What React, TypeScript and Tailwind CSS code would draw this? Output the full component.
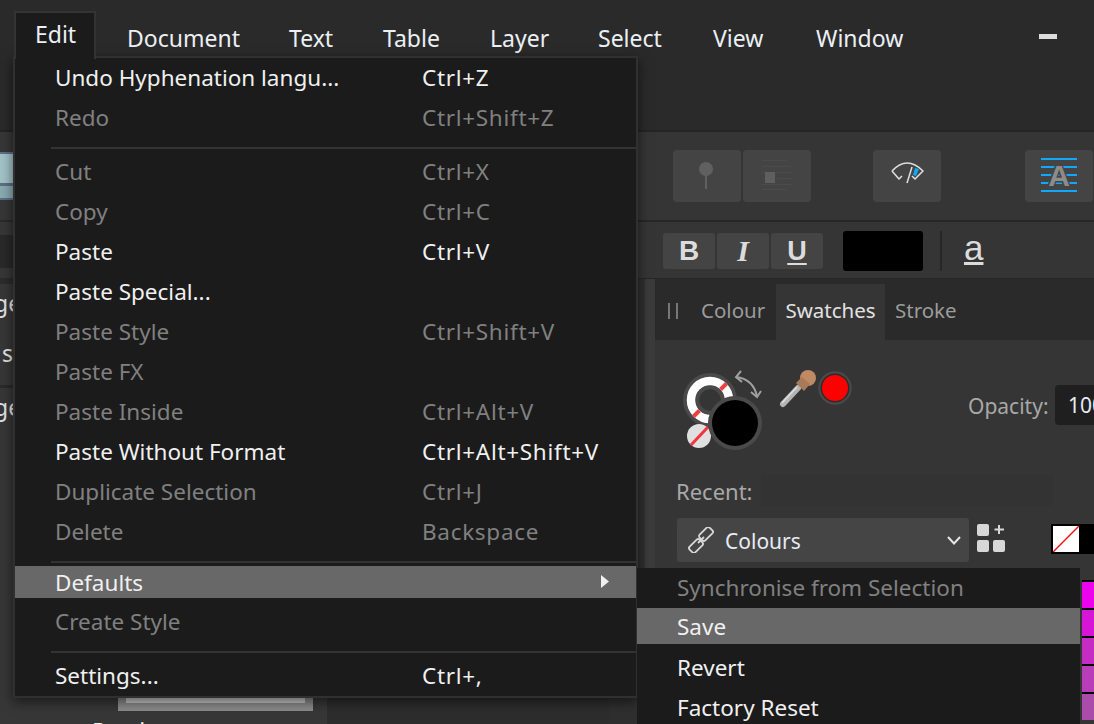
import React from "react";

const font = { fontFamily: '"Noto Sans", "Open Sans", sans-serif' };

type Row =
  | { kind: "item"; label: string; shortcut?: string; off?: boolean; hl?: boolean; arrow?: boolean }
  | { kind: "sep" };

const rows: Row[] = [
  { kind: "item", label: "Undo Hyphenation langu...", shortcut: "Ctrl+Z" },
  { kind: "item", label: "Redo", shortcut: "Ctrl+Shift+Z", off: true },
  { kind: "sep" },
  { kind: "item", label: "Cut", shortcut: "Ctrl+X", off: true },
  { kind: "item", label: "Copy", shortcut: "Ctrl+C", off: true },
  { kind: "item", label: "Paste", shortcut: "Ctrl+V" },
  { kind: "item", label: "Paste Special..." },
  { kind: "item", label: "Paste Style", shortcut: "Ctrl+Shift+V", off: true },
  { kind: "item", label: "Paste FX", off: true },
  { kind: "item", label: "Paste Inside", shortcut: "Ctrl+Alt+V", off: true },
  { kind: "item", label: "Paste Without Format", shortcut: "Ctrl+Alt+Shift+V" },
  { kind: "item", label: "Duplicate Selection", shortcut: "Ctrl+J", off: true },
  { kind: "item", label: "Delete", shortcut: "Backspace", off: true },
  { kind: "sep" },
  { kind: "item", label: "Defaults", hl: true, arrow: true },
  { kind: "item", label: "Create Style", off: true },
  { kind: "sep" },
  { kind: "item", label: "Settings...", shortcut: "Ctrl+," },
];

const menuBar = [
  { label: "Document", cls: "w-[162px]" },
  { label: "Text", cls: "w-[94px]" },
  { label: "Table", cls: "w-[107px]" },
  { label: "Layer", cls: "w-[108px]" },
  { label: "Select", cls: "w-[115px]" },
  { label: "View", cls: "w-[103px]" },
  { label: "Window", cls: "w-[110px]" },
];

function MenuRow({ r }: { r: Row }) {
  if (r.kind === "sep") {
    return (
      <div className="h-[14px] pl-[36px] pt-[9px]">
        <div className="h-[2px] bg-[#333333]" />
      </div>
    );
  }
  return (
    <div
      className={
        "relative flex items-center pl-[40px] " +
        (r.hl ? "h-[32px] mb-[4px] pt-[2px] bg-[#686868] " : "h-[40px] ") +
        (r.off ? "text-[#808080]" : "text-[#f0f0f0]")
      }
    >
      <span className="w-[367px] whitespace-nowrap">{r.label}</span>
      {r.shortcut && <span className="whitespace-nowrap tracking-[0.7px]">{r.shortcut}</span>}
      {r.arrow && (
        <svg className="absolute left-[585px] top-[9px]" width="10" height="13" viewBox="0 0 10 13">
          <path d="M1 0 L9 6.5 L1 13 Z" fill="#f0f0f0" />
        </svg>
      )}
    </div>
  );
}

function ToolButton({ children }: { children?: React.ReactNode }) {
  return <div className="h-[52px] w-[68px] shrink-0 rounded-[4px] bg-[#444444]">{children}</div>;
}

export default function App() {
  return (
    <div
      className="relative flex h-[724px] w-[1094px] flex-col overflow-hidden bg-[#2d2d2d] text-[23px] leading-none"
      style={font}
    >
      {/* menu bar */}
      <div className="flex h-[132px] shrink-0 border-b-2 border-[#242424] bg-[#2a2a2a] pl-[127px] text-[#ebf0f5]">
        {menuBar.map((m) => (
          <div key={m.label} className={"flex h-[76px] items-center whitespace-nowrap " + m.cls}>
            {m.label}
          </div>
        ))}
        <div className="ml-auto mr-[37px] mt-[34px] h-[5px] w-[18px] bg-[#dddddd]" />
      </div>

      <div className="flex min-h-0 flex-1">
        {/* left panel */}
        <div className="flex w-[327px] shrink-0 flex-col bg-[#373737] text-[#e6e6e6]">
          <div className="flex h-[90px] shrink-0 items-center border-b-2 border-[#2a2a2a]">
            <div className="h-[48px] w-[13px] bg-[#5b7084] py-[2px]">
              <div className="h-[29px] bg-[#a3c3c9]" />
              <div className="mt-[3px] h-[12px] bg-[#8aa9b2]" />
            </div>
          </div>
          <div className="flex h-[62px] shrink-0 items-center border-b-[6px] border-[#2c2c2c] pt-[3px]">
            <div className="h-[33px] w-[13px] bg-[#292929]" />
          </div>
          <div className="h-[38px] w-[13px] shrink-0 overflow-hidden">
            <div className="-ml-[6px] flex h-full items-center whitespace-nowrap">ge</div>
          </div>
          <div className="h-[63px] w-[13px] shrink-0 overflow-hidden">
            <div className="ml-[2px] flex h-full items-center whitespace-nowrap">st</div>
          </div>
          <div className="h-[3px] w-[13px] shrink-0 bg-[#2a2a2a]" />
          <div className="h-[38px] w-[13px] shrink-0 overflow-hidden">
            <div className="-ml-[6px] flex h-full items-center whitespace-nowrap">ge</div>
          </div>
          <div className="mt-auto ml-[118px] h-[40px] w-[195px] shrink-0 bg-[#8c8c8c] px-[8px] pt-[26px]">
            <div className="h-[6px] bg-[#c8c8c8]" />
          </div>
          <div className="h-[13px] shrink-0 pl-[92px] pt-[9px] text-[#f0f0f0]">Preview</div>
        </div>

        {/* canvas */}
        <div className="w-[282px] shrink-0 bg-[#2d2d2d]" />

        {/* right column */}
        <div className="flex min-w-0 flex-1 flex-col bg-[#353535]">
          <div className="flex h-[90px] shrink-0 items-center gap-[2px] border-b-2 border-[#272727] pl-[64px]">
            <ToolButton>
              <svg width="68" height="52" viewBox="0 0 68 52">
                <circle cx="33" cy="19" r="7" fill="#606060" />
                <rect x="32" y="20" width="2" height="19" fill="#606060" />
              </svg>
            </ToolButton>
            <ToolButton>
              <svg width="68" height="52" viewBox="0 0 68 52">
                <path d="M19 10.5H44M19 16.5H50M19 22.5H50M34 28.5H50M19 34.5H50M19 39.5H44" stroke="#4b4b4b" strokeWidth="1" />
                <rect x="22" y="22" width="10" height="11" fill="#5f5f5f" />
              </svg>
            </ToolButton>
            <div className="ml-[60px]">
              <ToolButton>
                <svg width="68" height="52" viewBox="0 0 68 52" fill="none">
                  <path d="M19 21Q34 5 50 21L42 29L39 26" stroke="#dcdcdc" strokeWidth="1.6" strokeLinejoin="round" />
                  <path d="M19 21L26 29L29 26" stroke="#dcdcdc" strokeWidth="1.6" strokeLinejoin="round" />
                  <path d="M34 33L39 17" stroke="#dcdcdc" strokeWidth="1.6" />
                  <path d="M42 18L46 19L43 26L40 25Z" fill="#10a8f8" />
                </svg>
              </ToolButton>
            </div>
            <div className="ml-[82px]">
              <ToolButton>
                <svg width="68" height="52" viewBox="0 0 68 52">
                  <path d="M16 9H52M16 17H52M16 25H52M16 33H52M16 41H52" stroke="#10a8f8" strokeWidth="2" />
                  <text
                    x="34"
                    y="36"
                    textAnchor="middle"
                    fontFamily="Liberation Sans"
                    fontWeight="700"
                    fontSize="30"
                    fill="#8c8c8c"
                    stroke="#444444"
                    strokeWidth="3"
                    paintOrder="stroke"
                  >
                    A
                  </text>
                </svg>
              </ToolButton>
            </div>
          </div>

          <div
            className="flex h-[57px] shrink-0 items-center border-b border-[#272727] pl-[54px] pt-[2px] text-[#dcdcdc]"
            style={{ fontFamily: '"Liberation Sans", sans-serif' }}
          >
            <div className="flex h-[36px] w-[52px] items-center justify-center rounded-[3px] bg-[#444444] text-[28px] font-bold">B</div>
            <div className="ml-[2px] flex h-[36px] w-[52px] items-center justify-center rounded-[3px] bg-[#444444] text-[30px] font-bold italic" style={{ fontFamily: '"Liberation Serif", serif' }}>I</div>
            <div className="ml-[2px] flex h-[36px] w-[52px] items-center justify-center rounded-[3px] bg-[#444444] text-[27px] font-bold underline underline-offset-[3px]">U</div>
            <div className="ml-[20px] h-[40px] w-[80px] rounded-[3px] bg-black" />
            <div className="ml-[17px] h-[40px] w-[2px] bg-[#272727]" />
            <div className="ml-[22px] pb-[8px] text-[35px] underline underline-offset-[2px]">a</div>
          </div>

          <div className="flex min-h-0 flex-1">
            <div className="w-[36px] shrink-0 bg-[#2f2f2f]" />
            <div className="w-[10px] shrink-0 bg-[#3b3b3b]" />
            <div className="flex min-w-0 flex-1 flex-col">
              {/* tabs */}
              <div className="flex h-[61px] shrink-0 items-end bg-[#2a2a2a] pl-[13px] text-[20.5px] text-[#9c9c9c]">
                <div className="flex h-[56px] items-center pb-[3px]">
                  <div className="h-[16px] w-[2px] bg-[#777777]" />
                  <div className="ml-[6px] h-[16px] w-[2px] bg-[#777777]" />
                  <span className="ml-[23px] w-[75px]">Colour</span>
                </div>
                <div className="flex h-[56px] w-[109px] items-center justify-center bg-[#353535] pb-[3px] text-[#e2e2e2]">Swatches</div>
                <div className="ml-[10px] flex h-[56px] items-center pb-[3px]">Stroke</div>
              </div>
              {/* colour widget */}
              <div className="flex h-[120px] shrink-0 pl-[25px] pt-[30px]">
                <svg className="shrink-0" width="180" height="90" viewBox="0 0 180 90" fill="none">
                  <circle cx="30" cy="30" r="27" fill="#4a4a4a" />
                  <circle cx="30" cy="30" r="19" stroke="#ffffff" strokeWidth="8.5" />
                  <circle cx="30" cy="30" r="12.5" stroke="#4a4a4a" strokeWidth="3.5" fill="#353535" />
                  <path d="M40.5 19.5L46.5 13.5M13.5 46.5L19.5 40.5" stroke="#f04040" strokeWidth="4" />
                  <path d="M56 7Q73 9 77 26" stroke="#a0a0a0" strokeWidth="2" />
                  <path d="M61 1L56 7L62 12M71 22L77 27L81 21" stroke="#a0a0a0" strokeWidth="2" />
                  <circle cx="19" cy="66" r="12" fill="#e0e0e0" />
                  <path d="M11 75L28 57" stroke="#f0353f" strokeWidth="3" />
                  <circle cx="55" cy="53" r="27" fill="#4a4a4a" />
                  <circle cx="55" cy="53" r="23" fill="#000000" />
                  <path d="M103 34L118 18" stroke="#b4b4b4" strokeWidth="6" strokeLinecap="round" />
                  <path d="M102 33L117 17" stroke="#e0e0e0" strokeWidth="1.5" />
                  <circle cx="128" cy="8" r="8" fill="#c08a65" />
                  <path d="M116 13L124 21L130 14L122 7Z" fill="#a97a58" />
                  <circle cx="155" cy="18" r="16.7" fill="#4a4a4a" />
                  <circle cx="155" cy="18" r="14.5" fill="#2c2c2c" />
                  <circle cx="155" cy="18" r="13" fill="#ff0000" />
                </svg>
                <div className="mt-[15px] ml-[108px] flex h-[40px] items-center text-[21px]">
                  <span className="w-[87px] shrink-0 whitespace-nowrap pt-[3px] text-[#a8a8a8]">Opacity:</span>
                  <div className="flex h-[40px] w-[60px] shrink-0 items-center overflow-hidden rounded-l-[4px] bg-[#1f1f1f] pl-[13px] text-[21px] text-[#e6ecf2]">100</div>
                </div>
              </div>
              {/* recent */}
              <div className="flex h-[58px] shrink-0 items-center pl-[21px] pt-[3px]">
                <span className="w-[85px] text-[22px] text-[#a8a8a8]">Recent:</span>
                <div className="h-[31px] w-[292px] bg-[#333333]" />
              </div>
              {/* palette */}
              <div className="flex h-[44px] shrink-0 pl-[22px]">
                <div className="flex h-[44px] w-[292px] shrink-0 items-center rounded-[3px] bg-[#454545] pl-[11px] text-[21px] text-[#e6ecf2]">
                  <svg width="26" height="26" viewBox="0 0 26 26" fill="none" stroke="#d8d8d8" strokeWidth="1.8">
                    <rect x="11" y="3" width="14" height="8" rx="2" transform="rotate(-45 18 7)" />
                    <rect x="1" y="15" width="14" height="8" rx="2" transform="rotate(-45 8 19)" />
                    <path d="M10 16L16 10" />
                  </svg>
                  <span className="ml-[11px] pt-[2px]">Colours</span>
                  <svg className="ml-auto mr-[8px]" width="14" height="9" viewBox="0 0 14 9" fill="none" stroke="#e6e6e6" strokeWidth="2">
                    <path d="M1 1L7 7.5L13 1" />
                  </svg>
                </div>
                <svg className="mt-[6px] ml-[8px] shrink-0" width="28" height="28" viewBox="0 0 28 28">
                  <rect x="0" y="0" width="12" height="12" rx="2" fill="#d8d8d8" />
                  <rect x="0" y="16" width="12" height="12" rx="2" fill="#d8d8d8" />
                  <rect x="16" y="16" width="12" height="12" rx="2" fill="#d8d8d8" />
                  <path d="M22 1V10M17.5 5.5H27" stroke="#d8d8d8" strokeWidth="2" />
                </svg>
                <div className="mt-[6px] ml-[46px] h-[30px] w-[43px] shrink-0 bg-black pt-[2px] pl-[2px]">
                  <svg width="26" height="26" viewBox="0 0 26 26">
                    <rect width="26" height="26" fill="#ffffff" />
                    <path d="M0 26L26 0" stroke="#f01414" strokeWidth="1.5" />
                  </svg>
                </div>
              </div>
              {/* swatch strip */}
              <div className="mt-[18px] ml-[427px] flex w-[12px] flex-col gap-[2px] bg-black pt-[2px]">
                <div className="h-[26px] shrink-0 bg-[#ec04ec]" />
                <div className="h-[26px] shrink-0 bg-[#d616d6]" />
                <div className="h-[26px] shrink-0 bg-[#c42cc4]" />
                <div className="h-[26px] shrink-0 bg-[#b83db8]" />
                <div className="h-[26px] shrink-0 bg-[#aa4caa]" />
              </div>
            </div>
          </div>
        </div>
      </div>

      {/* Edit tab */}
      <div className="absolute left-[14px] top-[11px] z-20 flex h-[48px] w-[82px] items-center border-2 border-b-0 border-[#333333] bg-[#1b1b1b] pb-[4px] pl-[19px] text-[#ebf0f5]">
        Edit
      </div>

      {/* menu */}
      <div className="absolute left-[13px] top-[56px] z-10 w-[625px] border-2 border-[#303030] bg-[#1b1b1b] text-[22.5px] shadow-[0_4px_12px_rgba(0,0,0,0.55)]">
        {rows.map((r, i) => (
          <MenuRow key={i} r={r} />
        ))}
      </div>

      {/* submenu */}
      <div className="absolute left-[637px] top-[568px] z-10 h-[156px] w-[443px] bg-[#1b1b1b] pl-[40px] text-[22.5px]">
        <div className="flex h-[40px] items-center text-[#808080]">Synchronise from Selection</div>
        <div className="-ml-[40px] flex h-[36px] items-center bg-[#686868] pl-[40px] pt-[3px] text-[#f0f0f0]">Save</div>
        <div className="mt-[4px] flex h-[40px] items-center text-[#f0f0f0]">Revert</div>
        <div className="flex h-[40px] items-center text-[#f0f0f0]">Factory Reset</div>
      </div>
    </div>
  );
}
